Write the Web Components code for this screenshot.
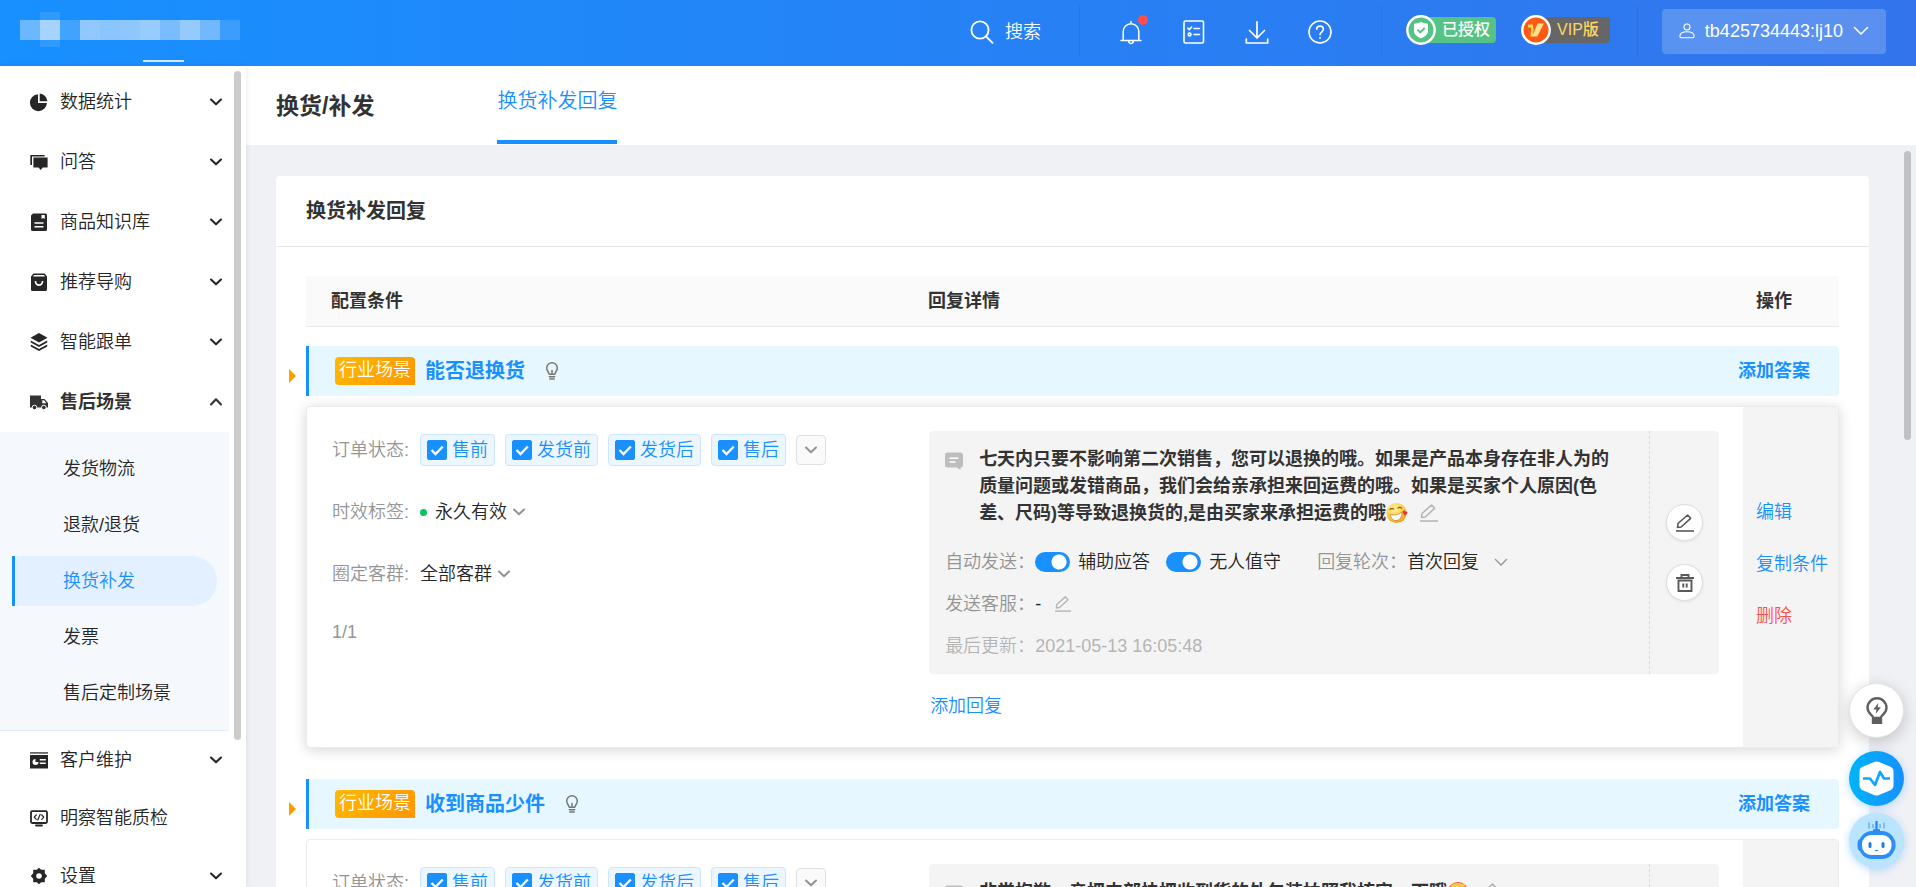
<!DOCTYPE html>
<html lang="zh-CN">
<head>
<meta charset="utf-8">
<meta name="viewport" content="width=device-width, initial-scale=1">
<title>换货补发回复</title>
<style>
  html, body { margin: 0; height: 100%; }
  body {
    font: 350 18px/28px "Liberation Sans", "Noto Sans CJK SC", sans-serif;
    color: #262626;
    background: #f0f1f5;
    overflow: hidden;
    --blue: #1890ff;
    --muted: #959595;
  }
</style>
</head>
<body>
<app-shell></app-shell>
<script>
const base = `*{box-sizing:border-box} button,input,select{font:inherit;color:inherit;margin:0}
button{border:0;padding:0;background:none;cursor:pointer} a{color:inherit;text-decoration:none}`;

function define(name, css, html) {
  const tpl = document.createElement('template');
  customElements.define(name, class extends HTMLElement {
    connectedCallback() {
      if (this.shadowRoot) return;
      const attr = key => this.getAttribute(key) || '';
      tpl.innerHTML = `<style>${base}${css}</style>` + (typeof html === 'function' ? html(attr, this) : html);
      this.attachShadow({ mode: 'open' }).append(tpl.content.cloneNode(true));
    }
  });
}

/* ---------- icons ---------- */
const line = (w, d, size = 24) => `<svg viewBox="0 0 ${size} ${size}" fill="none" stroke="currentColor" stroke-width="${w}" stroke-linecap="round" stroke-linejoin="round">${d}</svg>`;
const solid = (d, size = 18) => `<svg viewBox="0 0 ${size} ${size}" fill="currentColor">${d}</svg>`;
const icons = {
  search: line(1.9, '<circle cx="10" cy="10" r="8.6"/><path d="M16.5 16.8l6 6"/>'),
  bell: line(1.5, '<path d="M2 20.4h20M4.2 20V11.5a7.8 7.8 0 0 1 15.6 0V20M12 3.4V1.4M9.6 21c.3 3.3 4.5 3.3 4.8 0"/>'),
  list: line(1.6, '<rect x="2" y="1" width="19.500" height="22" rx="1.500"/><path d="M6 8.200l1.300 1.400L9.600 7M12 8.500h5.500M12 14.500h5.500"/><circle cx="7.600" cy="14.500" r="1.400"/>'),
  download: line(1.7, '<path d="M12 1.800V18M4.500 10.500L12 18l7.500-7.500M1.300 19v4h21.400v-4"/>'),
  help: line(1.6, '<circle cx="12" cy="12" r="11"/><path d="M8.700 9.300c0-4.200 6.700-4.200 6.700 0 0 2.500-3.400 2.500-3.400 5.500M12 17.600v.6"/>'),
  user: line(1.2, '<circle cx="9" cy="4.500" r="3.400"/><path d="M1 14.800c0-3.300 3-5 8-5s8 1.700 8 5c0 1.400-.6 1.700-1.700 1.700H2.700C1.600 16.500 1 16.200 1 14.800z"/>', 18),
  down: line(1.5, '<path d="M1.500 4.500L8 11l6.500-6.500"/>', 16),
  downThin: line(1.4, '<path d="M2.500 5.500L8 11l5.500-5.500"/>', 16),
  downThick: line(2.1, '<path d="M3 5.500l5 4.800 5-4.800"/>', 16),
  upThick: line(2.1, '<path d="M3 10.500L8 5.300l5 5.200"/>', 16),
  shield: `<svg viewBox="0 0 30 30"><circle cx="15" cy="15" r="13.700" fill="#57c285" stroke="#fff" stroke-width="2.400"/><path fill="#fff" d="M15 7c2.500 1.300 4.500 1.700 7 1.700V16c0 3.500-3.400 5.800-7 7.500C11.400 21.800 8 19.500 8 16V8.700c2.500 0 4.500-.4 7-1.700z"/><path d="M11.500 14.600l2.700 2.800 4.500-4.500" fill="none" stroke="#57c285" stroke-width="2"/></svg>`,
  vip: `<svg viewBox="0 0 30 30"><circle cx="15" cy="15" r="13.700" fill="#ff5a14" stroke="#fff" stroke-width="2.400"/><path fill="#ffd95c" d="M7 9.500h4.800l.7 5-.8 7H9.500l.8-9H7z"/><path fill="#ffe08a" d="M16.500 8.500h6.500l-6.800 13h-5z"/></svg>`,
  pie: solid('<path d="M8 1.200V10h8.900A8.500 8.500 0 1 1 8 1.200z"/><path d="M9.700.5A8.500 8.500 0 0 1 17.400 8.300H9.700z"/>'),
  chat: solid('<path d="M.3 2h14.300v1.600H2V12H.3z"/><path d="M3.400 4.600h14.200v9.800h-4.800L10.600 17l-2-2.600H3.400z"/>'),
  book: solid('<path fill-rule="evenodd" d="M3 .5h12.500A1.500 1.500 0 0 1 17 2v14.500a1.500 1.500 0 0 1-1.500 1.500H2.500A1.500 1.500 0 0 1 1 16.500v-14zM11.500 2v4l1.600-1 1.700 1V2zM4.500 9.300v1.500h9V9.300zM4.500 13v1.500h9V13z"/>'),
  bag: solid('<path fill-rule="evenodd" d="M3.400.5h11.200L17 3.600v12.900a1.500 1.500 0 0 1-1.500 1.500h-13A1.500 1.500 0 0 1 1 16.500V3.600zM4 2L3 3.400h12L14 2zM4.600 8c.2 6.700 8.600 6.700 8.800 0h-1.600c-.2 4.300-5.400 4.300-5.600 0z"/>'),
  layers: solid('<path d="M9 0l8.500 4.700L9 9.500.5 4.700z"/><path d="M.8 7.600L9 12l8.200-4.400v2L9 14 .8 9.600z"/><path d="M.8 11.600L9 16l8.200-4.400v2L9 18 .8 13.600z"/>'),
  truck: solid('<path fill-rule="evenodd" d="M0 2.500h11V6h3.500L18 10v4.500H0zM12.300 7.300v2.900h4l-2.300-2.900z"/><circle cx="4.500" cy="14.500" r="2.300" stroke="#fff"/><circle cx="13.800" cy="14.500" r="2.300" stroke="#fff"/>'),
  panel: solid('<path opacity=".7" d="M0 1h18v1.800H0z"/><path fill-rule="evenodd" d="M0 4h18v13.500H0zM5.500 8a3 3 0 1 0 3 3h-3zM9.800 8v1.600h6V8zM9.800 11.500v1.600h6v-1.600z"/>'),
  monitor: line(1.800, '<rect x="1" y="2.200" width="16" height="11.800" rx="1.200"/><path d="M6 16.500h6"/><path stroke-width="1.200" d="M6.300 6L4.200 8.200l2.100 2.200M11.700 6l2.100 2.200-2.100 2.200M10.200 5.300L7.800 11"/>', 18),
  gear: solid('<path fill-rule="evenodd" d="M9 .8l2.200 2h3.600v3.500L17.200 9l-2.400 2.700v3.500h-3.600L9 17.200l-2.200-2H3.200v-3.500L.8 9l2.400-2.700V2.800h3.600zM9 6.200a2.800 2.800 0 1 0 0 5.600 2.800 2.800 0 0 0 0-5.600z"/>'),
  bulb: line(1.500, '<path d="M6.200 12.200C5.900 10.300 3.700 9 3.700 6a5.300 5.300 0 0 1 10.600 0c0 3-2.200 4.300-2.500 6.200zM6.300 14.800h5.400M6.800 17h4.400M9 8.500v3.500"/>', 18),
  message: '<svg viewBox="0 0 18 18"><path fill="#bdbdbd" d="M2.500.5h13A2.500 2.500 0 0 1 18 3v10a2.500 2.500 0 0 1-2.500 2.500V18L12 15.500H2.500A2.500 2.500 0 0 1 0 13V3A2.500 2.500 0 0 1 2.500.5z"/><path d="M4.500 6.200h9M4.500 10h6" stroke="#fff" stroke-width="1.600"/></svg>',
  edit: line(1.600, '<path stroke-linecap="butt" d="M0 17h18"/><path d="M1.500 13.500l.5-4L11.600 1l3 3.300L5.200 13z"/>', 18),
  trash: line(1.900, '<path stroke-linecap="butt" stroke-linejoin="miter" d="M0 4h18M5.500 3.500V1h7v2.500M2.500 6.500h13V17h-13zM7.300 9.500v4M10.700 9.500v4"/>', 18),
  emojiGrin: `<svg viewBox="0 0 24 24"><defs><radialGradient id="g" cx=".4" cy=".3" r=".8"><stop offset="0" stop-color="#fff3a0"/><stop offset=".6" stop-color="#fdc93a"/><stop offset="1" stop-color="#e8900c"/></radialGradient></defs><circle cx="11.500" cy="12" r="11" fill="url(#g)"/><path d="M4 8.500c1.500-1.500 3.500-1.500 5-.5M12.500 7c1.500-1.500 3.500-1.500 5 0" fill="none" stroke="#9a5a10" stroke-width="1.300"/><path d="M4.500 13.500c4 1.500 9 .5 13-2.500 0 6-3 9-6.500 9.200-3.500.2-6-3-6.500-6.700z" fill="#fff" stroke="#b8792a" stroke-width=".8"/><path d="M18 10.500c1-2 3-1.500 3.200 0 1.800-.6 3 1 1.600 2.500L20 15z" fill="#f0323c"/></svg>`,
  emojiShy: `<svg viewBox="0 0 24 24"><circle cx="12" cy="12" r="11" fill="#ff4f38"/><path d="M3.500 5.500a10 7 0 0 1 17 0l-3 1.500h-11z" fill="#ffc83f"/><path d="M9 7h6M12 6v5" stroke="#ffe27a" stroke-width="1.500"/><path d="M8 16h8" stroke="#7a2b10" stroke-width="1.500"/></svg>`,
  flashBulb: `<svg viewBox="0 0 28 28" fill="none" stroke="#5f5f5f" stroke-width="2.400"><path d="M10.500 21C10 18 4.500 16.500 4.500 10.800a9.500 9.500 0 0 1 19 0c0 5.700-5.500 7.200-6 10.200zM10 21v4.700h8V21M10 23.500h8"/><path d="M15.300 6l-5 6.500h3.200L12.700 17l5.200-6.700h-3.300z" fill="#5f5f5f" stroke="none"/></svg>`,
  pulse: `<svg viewBox="0 0 55 55"><path fill="#fff" d="M25 11q2.500-1.200 5 0l12 5q2.500 1.300 2.500 4v15q0 2.700-2.500 4l-12 5q-2.500 1.200-5 0l-12-5q-2.500-1.300-2.500-4V20q0-2.700 2.500-4z"/><path d="M14 27.500h7l5 6.500 5-13 4 6.500h6" fill="none" stroke="#12a5ff" stroke-width="2.700" stroke-linejoin="round"/></svg>`,
  robot: `<svg viewBox="0 0 55 55"><path d="M20 9.500v6M24 11v4M31 11v4M35 9.500v6" stroke="#5eb6fa" stroke-width="1.500"/><path d="M27.500 8v9M24 17.500h7" stroke="#2388f0" stroke-width="2.300"/><rect x="10" y="18" width="36" height="28" rx="13" fill="#2b8ff5"/><rect x="8.500" y="25" width="38" height="14" rx="5" fill="#2b8ff5"/><rect x="13" y="22" width="29.500" height="20" rx="9" fill="#fff"/><path d="M21 30.500v3M34 30.500v3" stroke="#1a7fe8" stroke-width="3" stroke-linecap="round"/><path d="M25.500 37c.8 1.500 3.200 1.500 4 0z" fill="#1a7fe8"/></svg>`
};
define('ui-icon', ':host{display:inline-block;width:18px;height:18px;flex:none}svg{display:block;width:100%;height:100%;overflow:visible}',
  a => icons[a('name')]);

/* ---------- header ---------- */
define('blurred-brand', `
  :host{display:flex;position:relative;width:220px;height:20px;align-items:flex-end}
  i{flex:1;height:20px;background:#fff;opacity:var(--o)}
  .halo{position:absolute;left:20px;top:-8px;width:20px;height:35px;background:#fff;opacity:.1}
  .dash{position:absolute;left:123px;top:40px;width:41px;height:2px;background:#fff;opacity:.8}`,
  [.36, .58, .18, .52, .49, .51, .55, .42, .54, .38, .14].map(o => `<i style="--o:${o}"></i>`).join('') + '<div class="halo"></div><div class="dash"></div>');

define('status-badge', `
  :host{display:flex;align-items:center}
  ui-icon{width:30px;height:30px;position:relative}
  span{height:26px;margin-left:-16px;padding:0 var(--end) 0 22px;border-radius:4px;background:var(--tone);font-size:16px;line-height:26px;font-weight:500}`,
  a => `<ui-icon name="${a('icon')}"></ui-icon><span><slot></slot></span>`);

define('app-header', `
  :host{display:flex;align-items:center;height:66px;padding:0 30px 0 20px;color:#fff;background:linear-gradient(90deg,#1890ff,#3374ec)}
  blurred-brand{margin:-6px auto 0 0}
  .search{display:flex;align-items:center;gap:11px;margin-top:-2px;line-height:28px}
  .search ui-icon,.tool ui-icon{width:24px;height:24px}
  .rule{width:1px;height:50px;margin-top:-4px;background:rgba(0,40,120,.1)}
  .rule.first{margin-left:38px}
  .tools{display:flex;gap:39px;margin:0 49px 0 39px}
  .tool{position:relative;width:24px;height:24px;margin-top:-2px}
  .dot{position:absolute;right:-5px;top:-5px;width:10px;height:10px;border-radius:50%;background:#ff4d4f}
  .badges{display:flex;gap:25px;margin:-6px 27px 0 24px}
  .green{--tone:#57c285;--end:6px}.vip{--tone:#666;--end:11px;color:#ffd666}
  .account{display:flex;align-items:center;height:45px;margin:-4px 0 0 24px;padding:0 17px;border-radius:4px;background:rgba(255,255,255,.2)}
  .account span{margin:0 10px}.account ui-icon{width:16px;height:16px}`,
  `<blurred-brand></blurred-brand>
  <button class="search"><ui-icon name="search"></ui-icon><span>搜索</span></button>
  <div class="rule first"></div>
  <div class="tools">
    <button class="tool" aria-label="通知"><ui-icon name="bell"></ui-icon><i class="dot"></i></button>
    <button class="tool" aria-label="任务"><ui-icon name="list"></ui-icon></button>
    <button class="tool" aria-label="下载"><ui-icon name="download"></ui-icon></button>
    <button class="tool" aria-label="帮助"><ui-icon name="help"></ui-icon></button>
  </div>
  <div class="rule"></div>
  <div class="badges"><status-badge class="green" icon="shield">已授权</status-badge><status-badge class="vip" icon="vip">VIP版</status-badge></div>
  <div class="rule"></div>
  <button class="account"><ui-icon name="user"></ui-icon><span>tb425734443:lj10</span><ui-icon name="down"></ui-icon></button>`);

/* ---------- sidebar ---------- */
define('nav-item', `
  :host{display:block}
  button{display:flex;align-items:center;width:100%;height:60px;padding:0 10px 0 30px;text-align:left}
  :host([compact]) button{height:58px}
  :host([open]) button{font-weight:700;color:#333}
  span{flex:1;margin-left:12px}
  .arrow{width:16px;height:16px}
  nav{display:grid;gap:6px;margin-right:5px;padding:12px 12px;background:#f5f8fd;border-bottom:1px solid #e1efff}`,
  (a, el) => `<button${el.hasAttribute('open') ? ' aria-expanded="true"' : ''}><ui-icon name="${a('icon')}"></ui-icon><span>${a('label')}</span>${
    el.hasAttribute('leaf') ? '' : `<ui-icon class="arrow" name="${el.hasAttribute('open') ? 'upThick' : 'downThick'}"></ui-icon>`}</button>${
    el.hasAttribute('open') ? '<nav><slot></slot></nav>' : ''}`);

define('nav-link', `
  :host{display:block;height:50px;border-left:3px solid transparent;border-radius:0 25px 25px 0}
  :host([active]){border-color:var(--blue);background:#e2f0ff;color:var(--blue)}
  a{display:block;padding-left:48px;line-height:50px}`,
  '<a href="#"><slot></slot></a>');

define('side-nav', `
  :host{display:block;position:relative;z-index:1;width:246px;flex:none;overflow:hidden;background:#fff;box-shadow:1px 0 5px rgba(0,0,0,.08)}
  .menu{margin-right:12px;padding-top:6px}
  .thumb{position:absolute;right:5px;top:5px;bottom:147px;width:7px;border-radius:4px;background:#ccc}`,
  `<div class="menu">
    <nav-item icon="pie" label="数据统计"></nav-item>
    <nav-item icon="chat" label="问答"></nav-item>
    <nav-item icon="book" label="商品知识库"></nav-item>
    <nav-item icon="bag" label="推荐导购"></nav-item>
    <nav-item icon="layers" label="智能跟单"></nav-item>
    <nav-item icon="truck" label="售后场景" open>
      <nav-link>发货物流</nav-link><nav-link>退款/退货</nav-link><nav-link active>换货补发</nav-link><nav-link>发票</nav-link><nav-link>售后定制场景</nav-link>
    </nav-item>
    <nav-item icon="panel" label="客户维护" compact></nav-item>
    <nav-item icon="monitor" label="明察智能质检" compact leaf></nav-item>
    <nav-item icon="gear" label="设置" compact></nav-item>
  </div><div class="thumb"></div>`);

/* ---------- form parts ---------- */
define('check-chip', `
  :host{display:block}
  label{display:flex;align-items:center;gap:5px;height:32px;padding:0 6px;border:1px solid #cce6ff;border-radius:4px;background:#ebf6ff;color:var(--blue)}
  .box{position:relative;width:20px;height:20px}
  input{display:block;appearance:none;width:20px;height:20px;border:1px solid var(--blue);border-radius:2px}
  input:checked{background:var(--blue)}
  svg{position:absolute;inset:0;pointer-events:none}`,
  `<label><span class="box"><input type="checkbox" checked><svg viewBox="0 0 20 20" fill="none" stroke="#fff" stroke-width="2.300"><path d="M4.500 10l4 4 7.300-7.500"/></svg></span><slot></slot></label>`);

define('pick-list', `
  :host{display:inline-block;position:relative;color:#262626}
  select{display:block;appearance:none;width:92px;height:28px;border:0;padding:0;background:none;outline:0}
  :host([wide]) select{width:102px}
  ui-icon{position:absolute;right:0;top:6px;width:16px;height:16px;color:var(--muted);pointer-events:none}`,
  a => `<select aria-label="${a('label')}"><option>${a('value')}</option></select><ui-icon name="${a('arrow') || 'downThick'}"></ui-icon>`);

define('toggle-switch', `
  :host{display:inline-block}
  label{display:flex;align-items:center;gap:8px;color:#262626}
  input{appearance:none;width:35px;height:20px;border-radius:10px;background:radial-gradient(circle at 24px 10px,#fff 7px,transparent 8px) var(--blue)}`,
  '<label><input type="checkbox" role="switch" checked><slot></slot></label>');

/* ---------- reply ---------- */
define('reply-box', `
  :host{display:flex;border-radius:4px;background:#f4f4f4}
  .body{flex:1;min-width:0;padding:15px 16px 7px}
  .message{display:flex;gap:16px;padding-right:16px;margin-bottom:14px}
  .message>ui-icon{margin-top:6px}
  p{margin:0;font-weight:700;line-height:27px;color:#333}
  p ui-icon{vertical-align:-3px;color:#b5b5b5}
  p .face{width:22px;height:22px;vertical-align:-5px}
  p .pen{margin-left:12px}
  .row{display:flex;align-items:center;height:42px;color:var(--muted);white-space:nowrap}
  .row.late{color:#b5b5b5}
  .value{color:#262626}
  .pen{color:#b5b5b5}
  .row .pen{width:16px;height:16px;margin-left:14px}
  .assist{margin-right:16px}.unattended{margin-right:36px}
  .side{display:flex;flex-direction:column;align-items:center;justify-content:center;gap:23px;width:70px;border-left:1px dashed #d9d9d9}
  .side button{display:grid;place-items:center;width:37px;height:37px;border:1px solid #ddd;border-radius:50%;background:#fff;color:#595959;box-shadow:0 1px 3px rgba(0,0,0,.08)}`,
  a => `<div class="body">
    <div class="message"><ui-icon name="message"></ui-icon><p><slot></slot><ui-icon class="face" name="${a('face')}"></ui-icon><ui-icon class="pen" name="edit"></ui-icon></p></div>
    <div class="row">自动发送：<toggle-switch class="assist">辅助应答</toggle-switch><toggle-switch class="unattended">无人值守</toggle-switch>回复轮次：<pick-list wide label="回复轮次" value="首次回复" arrow="downThin"></pick-list></div>
    <div class="row">发送客服：<span class="value">-</span><ui-icon class="pen" name="edit"></ui-icon></div>
    <div class="row late">最后更新：<time>2021-05-13 16:05:48</time></div>
  </div>
  <div class="side"><button aria-label="编辑回复"><ui-icon name="edit"></ui-icon></button><button aria-label="删除回复"><ui-icon name="trash"></ui-icon></button></div>`);

define('answer-card', `
  :host{display:grid;grid-template-columns:minmax(0,622fr) minmax(0,816fr) 95px;border:1px solid #ebebeb;border-radius:4px;background:#fff}
  :host([raised]){box-shadow:0 2px 14px rgba(0,0,0,.16)}
  .conditions{display:flex;flex-direction:column;gap:30px;padding:27px 0 0 25px;color:var(--muted);white-space:nowrap}
  .field{display:grid;grid-template-columns:88px 1fr;align-items:center;height:32px}
  .chips{display:flex;align-items:center;gap:10px}
  .more{display:grid;place-items:center;width:30px;height:30px;border:1px solid #e0e0e0;border-radius:4px;background:#fafafa}
  .more ui-icon{width:16px;height:16px}
  .dot{display:inline-block;width:7px;height:7px;margin-right:8px;border-radius:50%;background:#07c160}
  .term{display:flex;align-items:center}
  .segment{justify-self:start}
  .count{line-height:24px}
  .replies{padding:24px 24px 27px 1px}
  .add{display:inline-block;margin:18px 0 0 1px;color:var(--blue)}
  .ops{display:flex;flex-direction:column;gap:24px;padding:91px 0 0 13px;border-radius:0 4px 4px 0;background:#f4f4f4;color:var(--blue);white-space:nowrap}
  .danger{color:#ff4d4f}`,
  `<div class="conditions">
    <div class="field"><span>订单状态:</span><div class="chips"><check-chip>售前</check-chip><check-chip>发货前</check-chip><check-chip>发货后</check-chip><check-chip>售后</check-chip><button class="more" aria-label="更多状态"><ui-icon name="downThick"></ui-icon></button></div></div>
    <div class="field"><span>时效标签:</span><div class="term"><i class="dot"></i><pick-list label="时效标签" value="永久有效"></pick-list></div></div>
    <div class="field"><span>圈定客群:</span><pick-list class="segment" label="圈定客群" value="全部客群"></pick-list></div>
    <div class="count">1/1</div>
  </div>
  <div class="replies"><slot></slot><a class="add" href="#">添加回复</a></div>
  <div class="ops"><a href="#">编辑</a><a href="#">复制条件</a><a class="danger" href="#">删除</a></div>`);

define('scene-bar', `
  :host{display:flex;align-items:center;position:relative;height:50px;padding:0 29px 0 26px;border-left:3px solid var(--blue);border-radius:0 4px 4px 0;background:#e6f7ff;color:var(--blue);font-weight:700}
  .mark{position:absolute;left:-20px;top:23px;border:7px solid transparent;border-left-color:#ff9c00;border-right-width:0}
  .tag{height:28px;padding:0 4px;border-radius:4px 4px 0 4px;background:linear-gradient(120deg,#ffb800,#ff9700);color:#fff;font-weight:350;line-height:26px}
  h3{margin:0 18px 0 10px;font-size:20px}
  ui-icon{color:#777}
  a{margin-left:auto}`,
  '<i class="mark"></i><span class="tag">行业场景</span><h3><slot></slot></h3><ui-icon name="bulb"></ui-icon><a href="#">添加答案</a>');

/* ---------- page ---------- */
define('page-head', `
  :host{display:flex;height:79px;padding-left:30px;background:#fff}
  h1{margin:0 123px 0 0;font-size:23px;line-height:80px;color:#333}
  a{height:78px;border-bottom:4px solid var(--blue);font-size:20px;line-height:70px;color:var(--blue)}`,
  '<h1>换货/补发</h1><a href="#" aria-current="page">换货补发回复</a>');

define('reply-panel', `
  :host{display:block;border-radius:4px 4px 0 0;background:#fff}
  h2{margin:0;padding:0 30px;border-bottom:1px solid #e8e8e8;font-size:20px;line-height:70px;color:#333}
  .content{padding:29px 30px}
  .head{display:grid;grid-template-columns:minmax(0,622fr) minmax(0,816fr) 95px;border-bottom:1px solid #e8e8e8;background:#fafafa;font-weight:700;line-height:50px;color:#333}
  .head :first-child{padding-left:25px}.head :last-child{padding-left:12px}
  scene-bar{margin-top:19px}
  answer-card{margin-top:10px}
  answer-card+scene-bar{margin-top:31px}`,
  `<h2>换货补发回复</h2>
  <div class="content">
    <div class="head"><span>配置条件</span><span>回复详情</span><span>操作</span></div>
    <scene-bar>能否退换货</scene-bar>
    <answer-card raised><reply-box face="emojiGrin">七天内只要不影响第二次销售，您可以退换的哦。如果是产品本身存在非人为的质量问题或发错商品，我们会给亲承担来回运费的哦。如果是买家个人原因(色差、尺码)等导致退换货的,是由买家来承担运费的哦</reply-box></answer-card>
    <scene-bar>收到商品少件</scene-bar>
    <answer-card><reply-box face="emojiShy">非常抱歉，亲把内部快把收到货的外包装拍照我核实一下哦</reply-box></answer-card>
  </div>`);

define('float-tools', `
  :host{position:absolute;right:12px;bottom:19px;z-index:2;display:grid;gap:7px}
  button{display:grid;place-items:center;width:55px;height:55px;border-radius:50%;box-shadow:0 2px 8px rgba(24,144,255,.3)}
  ui-icon{width:55px;height:55px}
  .tip{margin-bottom:6px;border:1px solid #e3e3e3;background:#fff;box-shadow:0 4px 16px rgba(0,0,0,.2)}
  .tip ui-icon{width:28px;height:28px}
  .health{background:linear-gradient(90deg,#00b4f8,#1890ff)}
  .bot{background:#bae4ff}`,
  `<button class="tip" aria-label="提示"><ui-icon name="flashBulb"></ui-icon></button>
  <button class="health" aria-label="诊断"><ui-icon name="pulse"></ui-icon></button>
  <button class="bot" aria-label="机器人"><ui-icon name="robot"></ui-icon></button>`);

define('app-shell', `
  :host{display:flex;flex-direction:column;height:100vh;position:relative}
  .below{display:flex;flex:1;min-height:0}
  main{display:flex;flex-direction:column;flex:1;min-width:0}
  .scroll{position:relative;flex:1;min-height:0;overflow:hidden;padding:31px 47px 0 30px}
  .thumb{position:absolute;right:5px;top:6px;width:7px;height:39%;border-radius:4px;background:#c1c1c4}`,
  `<app-header></app-header>
  <div class="below"><side-nav></side-nav><main><page-head></page-head><div class="scroll"><reply-panel></reply-panel><div class="thumb"></div></div></main></div>
  <float-tools></float-tools>`);
</script>
</body>
</html>
